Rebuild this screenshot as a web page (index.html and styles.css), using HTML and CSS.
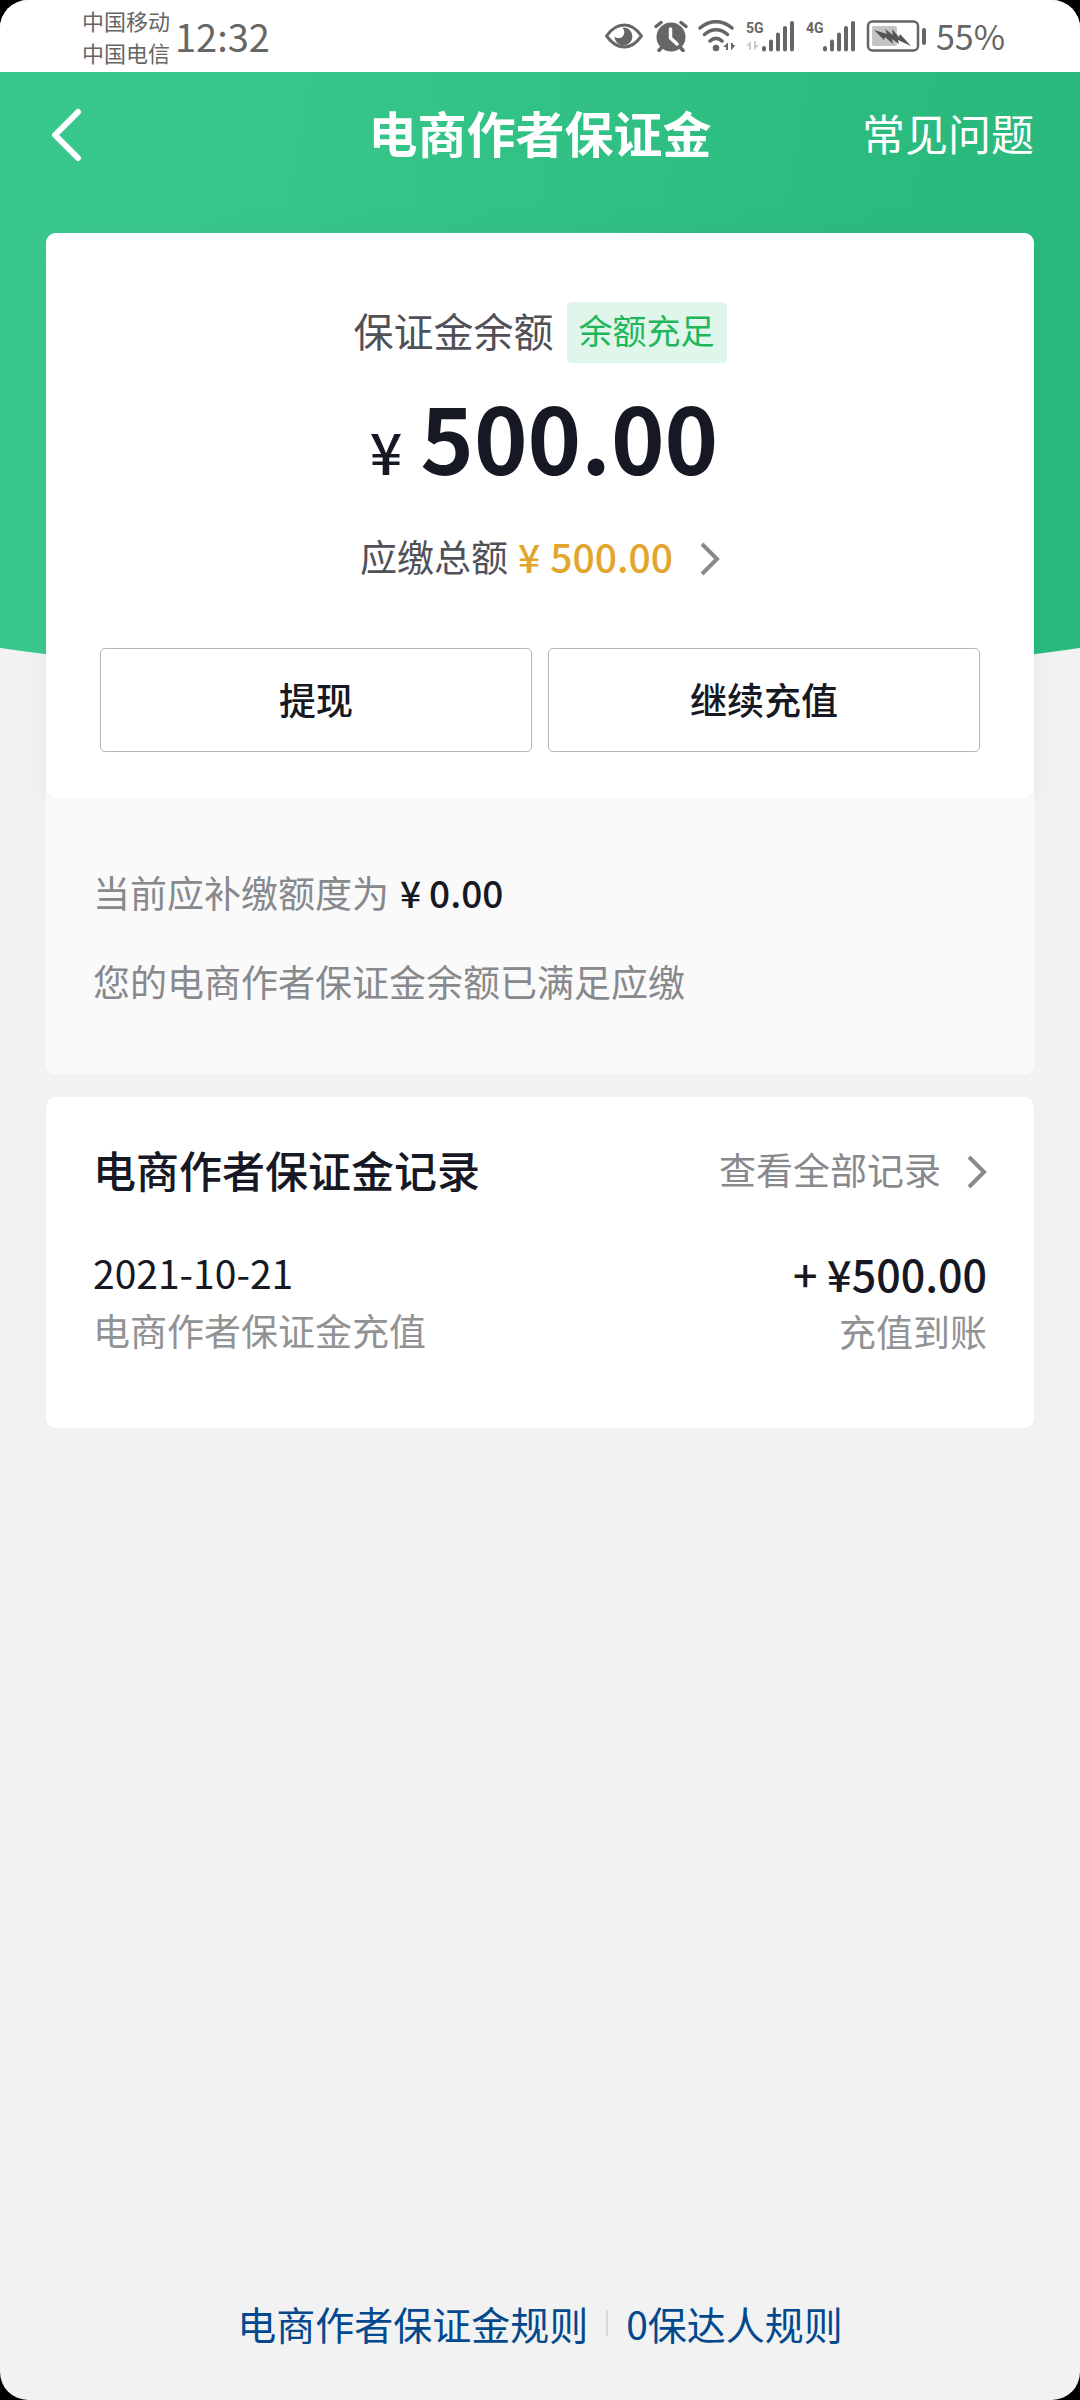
FILE: index.html
```html
<!DOCTYPE html>
<html lang="zh-CN">
<head>
<meta charset="utf-8">
<meta name="viewport" content="width=device-width, initial-scale=1">
<title>电商作者保证金</title>
<link rel="stylesheet" href="styles.css">
</head>
<body>
<div class="screen">
  <div class="status">
    <div class="carriers"><span>中国移动</span><span>中国电信</span></div>
    <time class="clock">12:32</time>
    <div class="indicators">
      <svg class="eye" width="40" height="32" viewBox="0 0 40 32" aria-hidden="true">
        <path d="M2.500 16C8 8 14 5 20.500 5S32 8 37.500 16C32 23.500 27 27 20.500 27S8 23.500 2.500 16Z" fill="none" stroke="#666" stroke-width="3" stroke-linejoin="round"/>
        <path d="M20 7.500a9 9 0 1 1-9.500 9c2 2 6 2 8 0c2.500-2.500 2.500-6 0-8.500Z" fill="#666"/>
      </svg>
      <svg class="alarm" width="34" height="32" viewBox="0 0 34 32" aria-hidden="true">
        <path d="M2 6.500L7 2.500M27 2.500l5 4M8 27l-3 3.500M26 27l3 3.500" stroke="#666" stroke-width="3.500" stroke-linecap="round"/>
        <circle cx="17" cy="17" r="14.500" fill="#666"/>
        <path d="M16.500 9v9l6.500 6" fill="none" stroke="#fff" stroke-width="3.500" stroke-linecap="round"/>
      </svg>
      <svg class="wifi" width="38" height="32" viewBox="0 0 38 32" aria-hidden="true">
        <path d="M2 8C12-.500 24-.500 34 8M6.500 14.500C13.500 8 22.500 8 29.500 14.500M12 21c4-3.500 8-3.500 12 0" fill="none" stroke="#666" stroke-width="3.500" stroke-linecap="round"/>
        <circle cx="18" cy="28" r="3.300" fill="#666"/>
        <path d="M25 27l5-4.500V30h-2v-3ZM37.500 25l-4.500 5.500V23h2v2Z" fill="#666"/>
      </svg>
      <svg class="signal" width="50" height="32" viewBox="0 0 50 32" role="img" aria-label="5G">
        <text x="0" y="13" class="net">5G</text>
        <path d="M0 26l5-5v9H3v-4ZM13 25l-5 5.500V21h2v4Z" fill="#ccc"/>
        <path d="M18 28v1.500M25 21.500v8M32 14.500v15M39 8v21.500M46 3v26.500" stroke="#666" stroke-width="4" stroke-linecap="round"/>
      </svg>
      <svg class="signal" width="50" height="32" viewBox="0 0 50 32" role="img" aria-label="4G">
        <text x="0" y="13" class="net">4G</text>
        <path d="M19 28v1.500M26 21.500v8M33 14.500v15M40 8v21.500M47 3v26.500" stroke="#666" stroke-width="4" stroke-linecap="round"/>
      </svg>
      <svg class="battery" width="60" height="32" viewBox="0 0 60 32" aria-hidden="true">
        <rect x="2" y="1.500" width="50" height="29" rx="4.500" fill="none" stroke="#666" stroke-width="2.500"/>
        <rect x="6" y="6" width="25" height="20" rx="2" fill="#c4c4c4"/>
        <path d="M8 10l13 4-2-5 8 6-1-6 7 8 1-3 11 12-13-6 1 4-7-5 1 5-8-7-1 3Z" fill="#555"/>
        <rect x="56" y="8" width="4" height="17" rx="2" fill="#666"/>
      </svg>
      <span class="percent">55%</span>
    </div>
  </div>

  <div class="page">
    <header class="bar">
      <button class="back" aria-label="返回">
        <svg width="32" height="56" viewBox="0 0 32 56" aria-hidden="true"><path d="M28 5L5 28l23 23" fill="none" stroke="#fff" stroke-width="6" stroke-linecap="round" stroke-linejoin="round"/></svg>
      </button>
      <h1>电商作者保证金</h1>
      <a class="faq" href="#faq">常见问题</a>
    </header>

    <main>
      <section class="card">
        <div class="balance">
          <div class="label-row"><span class="label">保证金余额</span><span class="tag">余额充足</span></div>
          <div class="amount"><span class="yen">¥</span><span class="value">500.00</span></div>
          <a class="due" href="#due">
            <span>应缴总额</span><strong><span>¥</span><span>500.00</span></strong>
            <svg class="chevron" width="20" height="34" viewBox="0 0 20 34" aria-hidden="true"><path d="M2 2l15 15L2 32" fill="none" stroke="#88898d" stroke-width="4"/></svg>
          </a>
          <div class="actions"><button>提现</button><button>继续充值</button></div>
        </div>
        <div class="info">
          <p>当前应补缴额度为<strong><span>¥</span><span>0.00</span></strong></p>
          <p>您的电商作者保证金余额已满足应缴</p>
        </div>
      </section>

      <section class="card records">
        <div class="head">
          <h2>电商作者保证金记录</h2>
          <a href="#records">查看全部记录
            <svg class="chevron" width="20" height="34" viewBox="0 0 20 34" aria-hidden="true"><path d="M2 2l15 15L2 32" fill="none" stroke="#88898d" stroke-width="4"/></svg>
          </a>
        </div>
        <div class="record">
          <div><time>2021-10-21</time><span>电商作者保证金充值</span></div>
          <div class="right"><strong>+ ¥500.00</strong><span>充值到账</span></div>
        </div>
      </section>
    </main>

    <footer>
      <a href="#deposit-rules">电商作者保证金规则</a>
      <i class="divider"></i>
      <a href="#creator-rules">0保达人规则</a>
    </footer>
  </div>
</div>
</body>
</html>
```
FILE: styles.css
```css
* { box-sizing: border-box; margin: 0; padding: 0; }
html { background: #000; }
body { font-family: "Noto Sans CJK SC", "Noto Sans", sans-serif; font-size: 37px; line-height: 48px; color: #161823; }
a { color: inherit; text-decoration: none; }
button { font: inherit; color: inherit; background: none; border: 0; cursor: pointer; }

.screen { min-height: 100vh; display: flex; flex-direction: column; background: #f2f2f2; border-radius: 28px; overflow: hidden; }

/* System status bar */
.status { height: 72px; padding: 0 75px 0 82px; display: flex; align-items: center; background: #fff; color: #666; }
.carriers { display: flex; flex-direction: column; font-size: 22px; line-height: 32px; margin-right: 5px; }
.clock { font-size: 38px; }
.indicators { margin-left: auto; display: flex; align-items: center; gap: 10px; }
.net { font: bold 14px Roboto, "Liberation Sans", sans-serif; fill: #666; }
.percent { font-size: 34px; }

/* Page with green backdrop */
.page { flex: 1; display: flex; flex-direction: column; position: relative; padding: 0 46px; }
.page::before { content: ""; position: absolute; top: 0; left: 0; right: 0; height: 613px; background: linear-gradient(100deg, #38c88b 18%, #2aba7d 80%); clip-path: ellipse(146% 100% at 50% 0); }
.bar, main, footer { position: relative; }
.bar { display: grid; grid-template-columns: 1fr auto 1fr; align-items: center; height: 125px; color: #fff; margin-bottom: 36px; }
.bar h1 { font-size: 49px; font-weight: 700; line-height: 60px; padding-bottom: 5px; }
.back { justify-self: start; display: flex; padding: 0 4px; }
.faq { justify-self: end; font-size: 43px; padding-bottom: 5px; }

.card { border-radius: 10px; background: #fafafb; }
.balance { padding: 69px 54px 46px; display: flex; flex-direction: column; align-items: center; background: #fff; border-radius: 10px; box-shadow: 0 0 30px rgba(90, 110, 180, .07); }
.label-row { display: flex; align-items: center; gap: 13px; }
.label { font-size: 40px; padding-bottom: 5px; color: #505158; }
.tag { font-size: 34px; line-height: 56px; padding: 0 12px 5px; border-radius: 5px; background: #e0f6eb; color: #20b75b; }
.amount { display: flex; align-items: baseline; gap: 18px; margin-top: 24px; padding-left: 8px; line-height: 96px; }
.yen { font-size: 57px; line-height: 56px; font-weight: 500; }
.value { font-size: 91px; font-weight: 700; }
.due { display: flex; align-items: center; margin-top: 49px; color: #505158; }
.due strong { display: flex; gap: 10px; margin: 0 27px 0 10px; font-size: 39px; font-weight: 500; color: #e2a52d; }
.chevron { flex: none; margin-top: 5px; }
.actions { align-self: stretch; display: grid; grid-template-columns: 1fr 1fr; gap: 16px; margin-top: 68px; }
.actions button { height: 104px; padding-bottom: 3px; border: 1px solid #b3b4b6; border-radius: 5px; font-weight: 500; }
.info { position: relative; padding: 70px 47px 69px; display: flex; flex-direction: column; gap: 41px; border-radius: 0 0 10px 10px; background: #fafafb; color: #88898d; }
.info p { display: flex; }
.info strong { display: flex; gap: 8px; margin-left: 11px; color: #161823; font-weight: 500; }

.records { margin-top: 23px; padding: 48px 47px 69px; background: #fff; }
.head { display: flex; justify-content: space-between; align-items: center; }
.head h2 { font-size: 43px; font-weight: 500; }
.head a { display: flex; align-items: center; gap: 26px; color: #88898d; }
.record { display: flex; justify-content: space-between; margin-top: 51px; line-height: 56px; color: #919294; }
.record div { display: flex; flex-direction: column; gap: 2px; }
.record time { font-size: 39px; color: #161823; }
.record .right { align-items: flex-end; padding-top: 1px; }
.record strong { font-size: 43px; font-weight: 500; color: #161823; }

footer { margin-top: auto; padding: 24px 0 53px; display: flex; justify-content: center; align-items: center; gap: 18px; font-size: 39px; color: #04498d; }
.divider { width: 2px; height: 26px; background: #d8d9db; }
```
